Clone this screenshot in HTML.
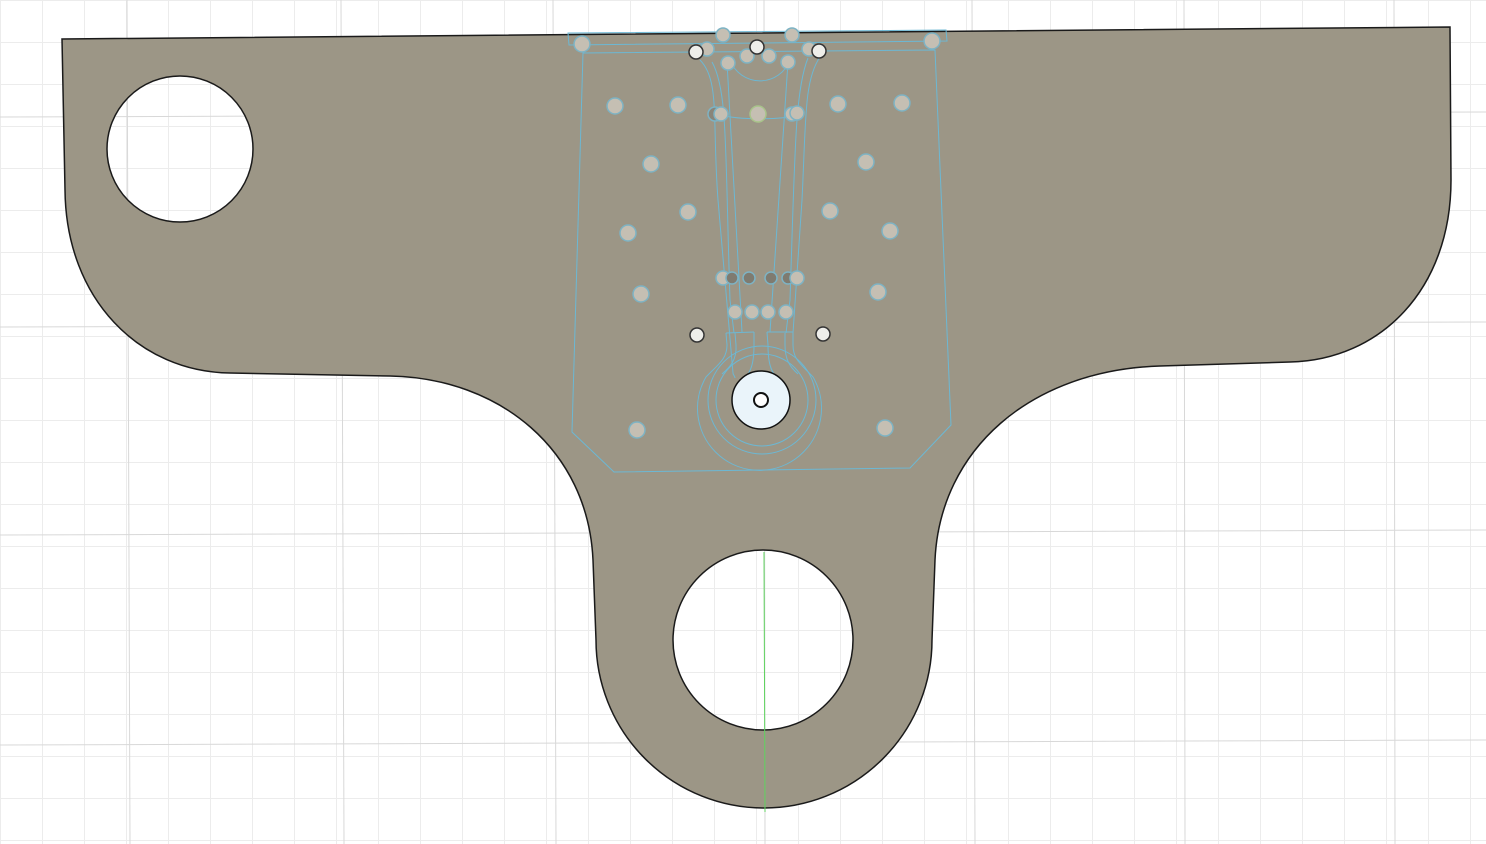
<!DOCTYPE html>
<html><head><meta charset="utf-8"><style>html,body{margin:0;padding:0;background:#fff;overflow:hidden}svg{display:block}</style></head>
<body>
<svg width="1486" height="844" viewBox="0 0 1486 844" xmlns="http://www.w3.org/2000/svg">
<defs>
<pattern id="g" x="0" y="0" width="42" height="42" patternUnits="userSpaceOnUse">
<path d="M0.5,0 V42 M0,0.5 H42" stroke="#ececec" stroke-width="1" fill="none"/>
</pattern>
</defs>
<rect width="1486" height="844" fill="#fff"/>
<rect width="1486" height="844" fill="url(#g)"/>
<g stroke="#d8d8d8" stroke-width="1">
<line x1="127" y1="0" x2="130" y2="844"/><line x1="341" y1="0" x2="344" y2="844"/><line x1="553" y1="0" x2="556" y2="844"/><line x1="764" y1="0" x2="765" y2="844"/><line x1="972" y1="0" x2="975" y2="844"/><line x1="1184" y1="0" x2="1185" y2="844"/><line x1="1394" y1="0" x2="1395" y2="844"/>
<line x1="0" y1="117" x2="1486" y2="112"/><line x1="0" y1="327" x2="1486" y2="322"/><line x1="0" y1="535" x2="1486" y2="530"/><line x1="0" y1="745" x2="1486" y2="740"/>
</g>
<path fill-rule="evenodd" fill="#9c9686" stroke="#1a1a1a" stroke-width="1.5"
d="M62,39 L1450,27 L1451,180 C1451,290 1380,360 1290,362 L1160,366 C1030,370 940,450 935,560 L932,640 A168,168 0 0 1 596,640 L593,560 C588,450 500,378 390,376 L230,373 C140,372 66,300 65,190 Z
M107,149 A73,73 0 1 0 253,149 A73,73 0 1 0 107,149 Z
M673,640 A90,90 0 1 0 853,640 A90,90 0 1 0 673,640 Z"/>
<line x1="764" y1="552" x2="765" y2="812" stroke="#5fd35f" stroke-width="1"/>
<g fill="none" stroke="#6cb8d4" stroke-width="1">
<path d="M568,33 L946,30 L947,41 L569,45 Z"/>
<path d="M583,53 L935,50 L951,425 L910,468 L614,472 L572,432 Z"/>
<path d="M700,60 C720,80 712,120 718,200 L733,373 C733,375 735,376 735,378"/>
<path d="M712,62 C728,90 725,150 730,300 L734,333"/>
<path d="M820,57 C804,80 806,120 802,200 L793,333"/>
<path d="M808,58 C795,90 795,150 790,300 L786,333"/>
<path d="M727,62 L742,332 M788,62 L770,332"/>
<path d="M730,60 A32,32 0 0 0 790,60"/>
<path d="M720,115 C740,120 780,120 800,115"/>
<path d="M726,333 L754,332 M767,332 L793,332"/>
<path d="M726,333 L727,345 C727,360 717,365 706,377 A62,62 0 1 0 813,377 C802,365 793,360 793,345 L793,333"/>
<path d="M735,333 L736,345 C737,360 730,367 722,374"/>
<path d="M754,332 L754,345 C754,360 752,368 748,374"/>
<path d="M767,332 L768,345 C768,360 770,368 774,374"/>
<path d="M785,333 L785,345 C785,360 790,367 798,374"/>
<circle cx="762" cy="400" r="54"/><circle cx="762" cy="400" r="46"/>
</g>
<circle cx="761" cy="400" r="29" fill="#eaf4fa" stroke="#111" stroke-width="1.5"/>
<circle cx="761" cy="400" r="7" fill="#fff" stroke="#111" stroke-width="2"/>
<g fill="#c5bfb3" stroke="#7db3c4" stroke-width="1.5">
<circle cx="615" cy="106" r="8"/><circle cx="678" cy="105" r="8"/><circle cx="838" cy="104" r="8"/><circle cx="902" cy="103" r="8"/>
<circle cx="651" cy="164" r="8"/><circle cx="866" cy="162" r="8"/>
<circle cx="688" cy="212" r="8"/><circle cx="830" cy="211" r="8"/>
<circle cx="628" cy="233" r="8"/><circle cx="890" cy="231" r="8"/>
<circle cx="641" cy="294" r="8"/><circle cx="878" cy="292" r="8"/>
<circle cx="637" cy="430" r="8"/><circle cx="885" cy="428" r="8"/>
<circle cx="582" cy="44" r="8"/><circle cx="932" cy="41" r="8"/>
<circle cx="723" cy="35" r="7"/><circle cx="792" cy="35" r="7"/>
<circle cx="728" cy="63" r="7"/><circle cx="788" cy="62" r="7"/>
<circle cx="747" cy="56" r="7"/><circle cx="769" cy="56" r="7"/>
<circle cx="707" cy="49" r="7"/><circle cx="809" cy="49" r="7"/>
<circle cx="715" cy="114" r="7" fill="#8a8579"/><circle cx="721" cy="114" r="7"/>
<circle cx="792" cy="114" r="7"/><circle cx="797" cy="113" r="7"/>
<circle cx="758" cy="114" r="8" stroke="#a8c48a"/>
<circle cx="723" cy="278" r="7"/><circle cx="732" cy="278" r="6" fill="#7f7b70"/><circle cx="749" cy="278" r="6" fill="#7f7b70"/><circle cx="771" cy="278" r="6" fill="#7f7b70"/><circle cx="788" cy="278" r="6" fill="#7f7b70"/><circle cx="797" cy="278" r="7"/>
<circle cx="735" cy="312" r="7"/><circle cx="752" cy="312" r="7"/><circle cx="768" cy="312" r="7"/><circle cx="786" cy="312" r="7"/>
</g>
<g fill="#eeeeea" stroke="#333" stroke-width="1.5">
<circle cx="697" cy="335" r="7"/><circle cx="823" cy="334" r="7"/>
<circle cx="757" cy="47" r="7"/><circle cx="696" cy="52" r="7"/><circle cx="819" cy="51" r="7"/>
</g>
</svg>
</body></html>
